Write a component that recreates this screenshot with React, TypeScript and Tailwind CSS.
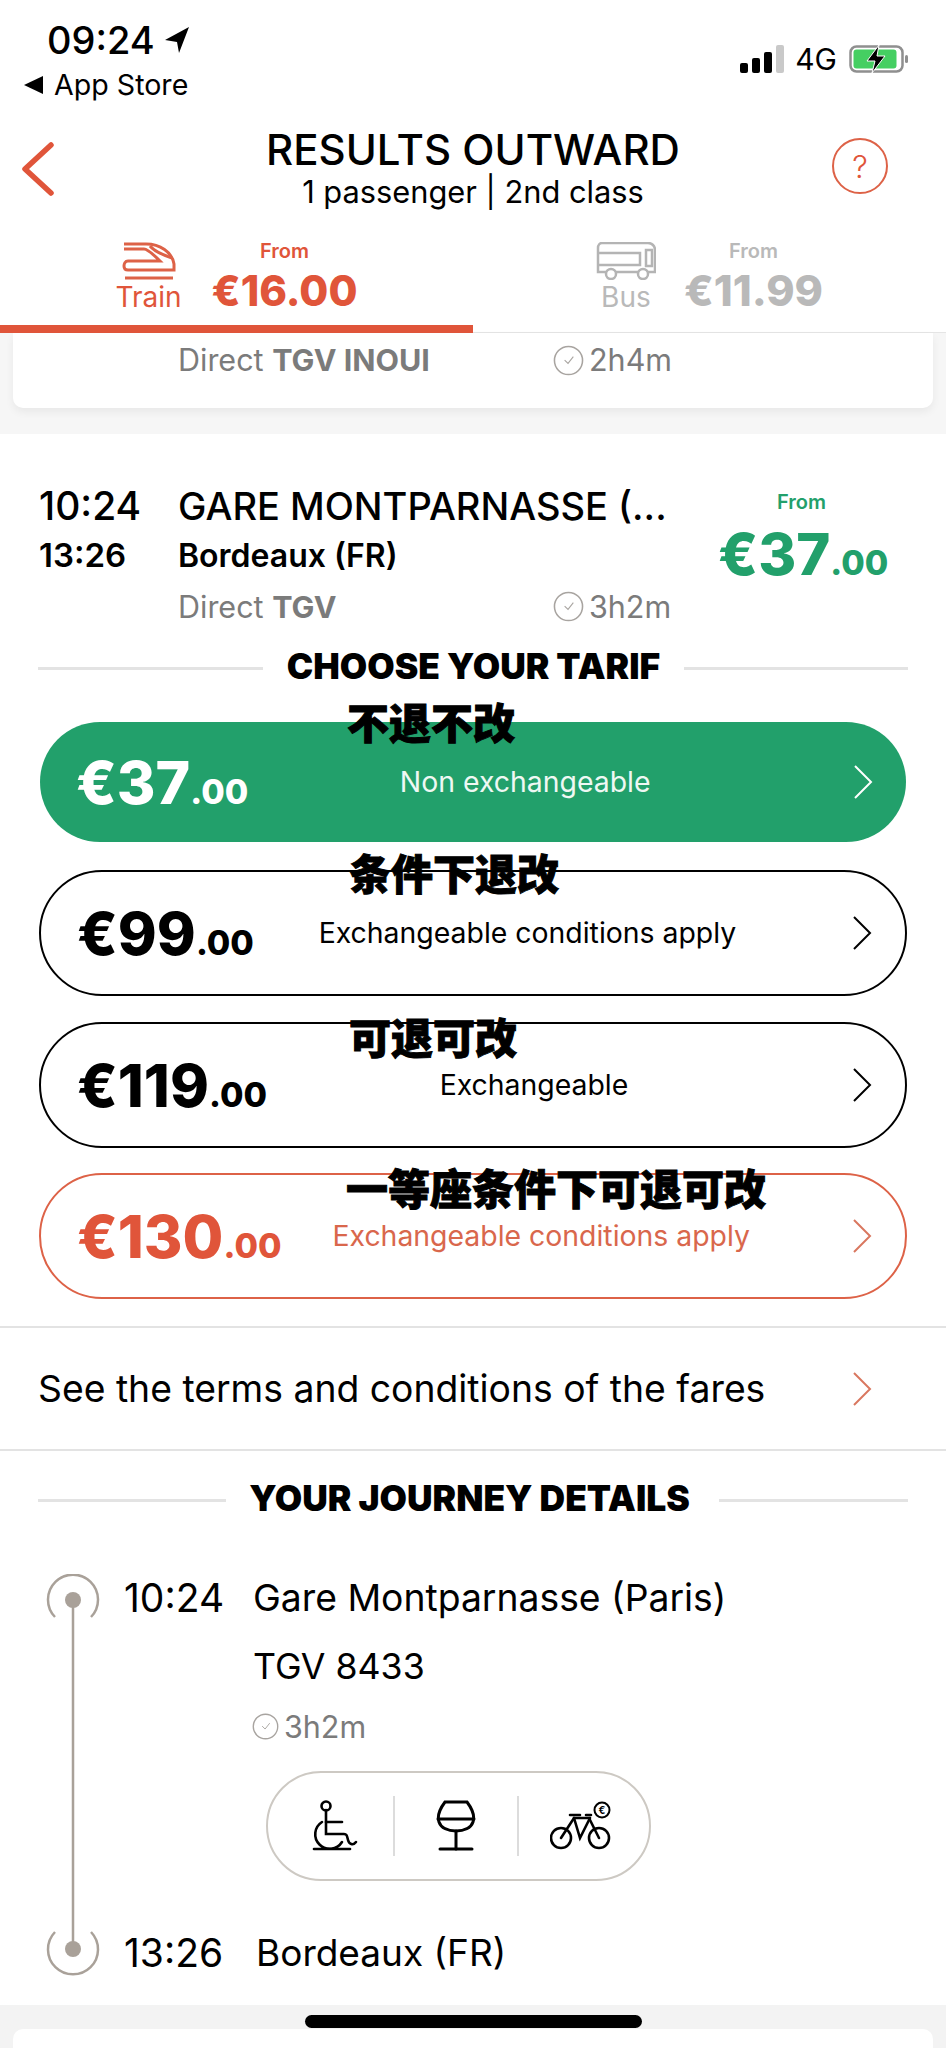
import React from "react";

const Clock = ({ s = 31 }: { s?: number }) => (
  <svg width={s} height={s} viewBox="0 0 32 32" fill="none" stroke="#a8a4a0" strokeWidth="1.6" className="shrink-0">
    <circle cx="16" cy="16" r="14.5" />
    <path d="M12 15.5l3.5 3.5L21 12" strokeWidth="1.1" />
  </svg>
);

const Chev = ({ c }: { c: string }) => (
  <svg width="20" height="36" viewBox="0 0 20 36" fill="none" stroke={c} strokeWidth="2" className="shrink-0">
    <path d="M2 2l16 16L2 34" />
  </svg>
);

const Divider = ({ title, left, right, tc }: { title: string; left: string; right: string; tc: string }) => (
  <div className="flex items-center px-[38px] h-[50px]">
    <div className={`${left} h-[3px] bg-[#e3e3e3]`} />
    <div className={`flex-1 text-center text-[35.4px] font-black text-black whitespace-nowrap mt-[-2px] ${tc}`}>{title}</div>
    <div className={`${right} h-[3px] bg-[#e3e3e3]`} />
  </div>
);

const Fare = ({
  box, price, label, cn, c, note, noteCls,
}: {
  box: string; price: string; label: string; cn: string; c: string; note: string; noteCls: string;
}) => (
  <div className={`relative flex items-center rounded-full pl-[36px] pr-[33px] ${box}`}>
    <div className="font-extrabold leading-none whitespace-nowrap">
      <span className="text-[59px]">{price}</span>
      <span className="text-[34px]">.00</span>
    </div>
    <div className={`flex-1 text-center text-[28.4px] whitespace-nowrap pr-[51px] ${cn}`}>{label}</div>
    <Chev c={c} />
    <div className={`absolute whitespace-nowrap text-[42px] leading-none font-black text-black [-webkit-text-stroke:1px_black] ${noteCls}`} style={{ fontFamily: '"Noto Sans CJK SC", sans-serif' }}>{note}</div>
  </div>
);

export default function App() {
  return (
    <div className="relative w-[946px] h-[2048px] overflow-hidden bg-white text-black" style={{ fontFamily: 'Inter, "Noto Sans CJK SC", sans-serif' }}>
      {/* status bar */}
      <div className="flex justify-between h-[117px]">
        <div className="pl-[24px] pt-[17px]">
          <div className="flex items-center pl-[23px] h-[46px]">
            <span className="text-[38px] font-medium leading-none">09:24</span>
            <svg width="24" height="26" viewBox="0 0 24 26" className="ml-[10px]"><path d="M24 0L14 26l-2-11L0 13z" fill="#000" /></svg>
          </div>
          <div className="flex items-center mt-[7px] h-[30px]">
            <svg width="19" height="18" viewBox="0 0 19 18"><path d="M19 0v18L0 9z" fill="#000" /></svg>
            <span className="ml-[11px] text-[28.6px] leading-none">App Store</span>
          </div>
        </div>
        <div className="flex items-center h-[28px] mt-[45px] pr-[37px]">
          <svg width="44" height="28" viewBox="0 0 44 28">
            <rect x="0" y="18" width="8" height="10" rx="2" fill="#000" />
            <rect x="12" y="13" width="8" height="15" rx="2" fill="#000" />
            <rect x="24" y="7" width="8" height="21" rx="2" fill="#000" />
            <rect x="36" y="0" width="8" height="28" rx="2" fill="#c9c9c9" />
          </svg>
          <span className="ml-[11px] text-[30px] leading-none">4G</span>
          <svg width="60" height="28" viewBox="0 0 60 28" className="ml-[12px]">
            <rect x="1.5" y="1.5" width="52" height="25" rx="6" fill="none" stroke="#8f8f8f" strokeWidth="2.5" />
            <rect x="4.5" y="4.5" width="43" height="19" rx="3" fill="#45cf62" />
            <rect x="56" y="10" width="3" height="8" rx="1.5" fill="#8f8f8f" />
            <path d="M30 0L18 16h8l-3 12 13-17h-8z" fill="#000" stroke="#fff" strokeWidth="1" />
          </svg>
        </div>
      </div>

      {/* header */}
      <div className="relative flex flex-col items-center h-[113px]">
        <div className="text-[42px] font-medium leading-none mt-[12px] h-[46px] whitespace-nowrap">RESULTS OUTWARD</div>
        <div className="text-[30.8px] leading-none mt-[2px] whitespace-nowrap">1 passenger | 2nd class</div>
        <svg width="34" height="54" viewBox="0 0 34 54" fill="none" stroke="#e0553a" strokeWidth="5.5" strokeLinecap="round" strokeLinejoin="round" className="absolute left-[21px] top-[25px]">
          <path d="M30 3L4 27l26 24" />
        </svg>
        <div className="absolute left-[832px] top-[21px] w-[56px] h-[56px] rounded-full border-2 border-[#dd6247] flex items-center justify-center text-[31px] font-light text-[#e0553a] leading-none">?</div>
      </div>

      {/* tabs */}
      <div className="flex h-[103px] border-b border-[#e5e5e5]">
        <div className="w-[473px] h-[103px] border-b-[8px] border-[#e0553a] flex justify-center items-start gap-[30px] pt-[12px] text-[#e0553a]">
          <div className="flex flex-col items-center">
            <svg width="54" height="38" viewBox="0 0 54 38" fill="none" stroke="#dd6247" strokeWidth="3">
              <path d="M2 2h22c14 0 26 8 28 20v6H6c-3 0-4-2-4-4s1-5 4-5h32C36 17 26 7 22 7H2" />
              <path d="M28 4c4 5 10 8 22 12" />
              <path d="M3 36h48" />
            </svg>
            <span className="text-[28px] leading-none mt-[3px]">Train</span>
          </div>
          <div className="flex flex-col items-center">
            <span className="text-[20px] font-semibold leading-none mt-[-1px]">From</span>
            <span className="text-[42px] font-extrabold leading-none mt-[9px]">€16.00</span>
          </div>
        </div>
        <div className="w-[473px] h-[103px] flex justify-center items-start gap-[28px] pt-[12px] text-[#b9b9b9]">
          <div className="flex flex-col items-center">
            <svg width="60" height="38" viewBox="0 0 60 38" fill="none" stroke="#b4b4b4" strokeWidth="2.5">
              <path d="M6 1h46c4 0 7 3 7 7v22H2V6c0-3 2-5 4-5z" />
              <path d="M2 11h42v12H2" />
              <path d="M50 8h6v16h-6z" />
              <circle cx="15" cy="32" r="5" fill="#fff" />
              <circle cx="47" cy="32" r="5" fill="#fff" />
            </svg>
            <span className="text-[28px] leading-none mt-[3px]">Bus</span>
          </div>
          <div className="flex flex-col items-center">
            <span className="text-[20px] font-semibold leading-none mt-[-1px]">From</span>
            <span className="text-[43px] font-extrabold leading-none mt-[8px]">€11.99</span>
          </div>
        </div>
      </div>

      {/* previous result card */}
      <div className="bg-[#f6f6f6] h-[101px] px-[13px]">
        <div className="bg-white rounded-b-[10px] h-[75px] shadow-[0_4px_8px_rgba(0,0,0,0.06)] flex pl-[165px] pt-[9px] items-start">
          <div className="w-[375px] text-[30.5px] leading-[36px] text-[#7b7b7b]">Direct <b className="font-bold">TGV INOUI</b></div>
          <div className="flex items-center gap-[5px] text-[30.5px] leading-[36px] text-[#7b7b7b]"><Clock />2h4m</div>
        </div>
      </div>

      {/* result */}
      <div className="pt-[47px]">
        <div className="flex pl-[39px]">
          <div className="w-[139px]">
            <div className="h-[50px] flex items-center text-[39px] font-medium">10:24</div>
            <div className="h-[50px] flex items-center text-[33px] font-semibold">13:26</div>
          </div>
          <div className="w-[540px]">
            <div className="h-[50px] flex items-center text-[38px] font-medium whitespace-nowrap">GARE MONTPARNASSE (...</div>
            <div className="h-[50px] flex items-center text-[32px] font-semibold whitespace-nowrap">Bordeaux (FR)</div>
            <div className="h-[51px] flex items-center text-[30.5px] text-[#7b7b7b]">
              <div className="w-[375px]">Direct <b className="font-bold">TGV</b></div>
              <div className="flex items-center gap-[5px]"><Clock />3h2m</div>
            </div>
          </div>
          <div className="w-[167px] text-[#22a06b] text-center">
            <div className="text-[20px] font-semibold leading-none mt-[11px]">From</div>
            <div className="font-extrabold leading-none mt-[13px] whitespace-nowrap"><span className="text-[58px]">€37</span><span className="text-[34px]">.00</span></div>
          </div>
        </div>

        <div className="mt-[11px]"><Divider title="CHOOSE YOUR TARIF" left="w-[225px]" right="w-[224px]" tc="" /></div>

        <div className="flex flex-col px-[39px] mt-[29px]">
          <Fare box="h-[120px] mx-[1px] bg-[#22a06b] text-white" price="€37" label="Non exchangeable" cn="text-[#eef8f3]" c="#ffffff" note="不退不改" noteCls="left-[307px] top-[-22px]" />
          <Fare box="h-[126px] mt-[28px] border-2 border-black text-black" price="€99" label="Exchangeable conditions apply" cn="text-black" c="#000000" note="条件下退改" noteCls="left-[308px] top-[-21px]" />
          <Fare box="h-[126px] mt-[26px] border-2 border-black text-black" price="€119" label="Exchangeable" cn="text-black" c="#000000" note="可退可改" noteCls="left-[308px] top-[-9px]" />
          <Fare box="h-[126px] mt-[25px] border-2 border-[#dd6247] text-[#e0553a]" price="€130" label="Exchangeable conditions apply" cn="text-[#d9674c]" c="#d9775f" note="一等座条件下可退可改" noteCls="left-[305px] top-[-9px]" />
        </div>

        <div className="mt-[27px] border-t-2 border-b-2 border-[#e3e3e3] h-[125px] flex items-center justify-between pl-[38px] pr-[74px]">
          <span className="text-[37.3px] whitespace-nowrap">See the terms and conditions of the fares</span>
          <Chev c="#d9775f" />
        </div>

        <div className="mt-[24px]"><Divider title="YOUR JOURNEY DETAILS" left="w-[188px]" right="w-[189px]" tc="pr-[6px]" /></div>

        {/* timeline */}
        <div className="relative pl-[124px] mt-[48px] h-[432px]">
          <svg width="56" height="402" viewBox="0 0 56 402" fill="none" className="absolute left-[45px] top-[1px]">
            <path d="M10 43A25 25 0 1 1 46 43" stroke="#a9a199" strokeWidth="2.5" />
            <path d="M10 358A25 25 0 1 0 46 358" stroke="#a9a199" strokeWidth="2.5" />
            <path d="M28 26V376" stroke="#a9a199" strokeWidth="2.5" />
            <circle cx="28" cy="26" r="8" fill="#a9a199" />
            <circle cx="28" cy="375" r="8" fill="#a9a199" />
          </svg>
          <div className="flex items-center h-[50px]">
            <span className="w-[129px] text-[39px]">10:24</span>
            <span className="text-[37.3px] whitespace-nowrap">Gare Montparnasse (Paris)</span>
          </div>
          <div className="pl-[129px] mt-[18px] text-[35.7px] leading-[50px] whitespace-nowrap">TGV 8433</div>
          <div className="ml-[128px] mt-[13px] flex items-center gap-[5px] text-[30.5px] text-[#7b7b7b]"><Clock s={27} />3h2m</div>
          <div className="ml-[142px] mt-[21px] w-[385px] h-[110px] rounded-full border-2 border-[#cdc9c3] flex items-center">
            <div className="w-[125px] flex justify-center pl-[8px]">
              <svg width="46" height="52" viewBox="0 0 46 52" fill="none" stroke="#000" strokeWidth="2.6" strokeLinecap="round">
                <circle cx="14" cy="6" r="4.5" />
                <path d="M14 10v24h18c3 0 3 2 4 6 1 4 5 6 8 2" />
                <path d="M14 22h16" />
                <path d="M10 22a14.5 14.5 0 1 0 20 20" />
                <path d="M2 49h36" />
              </svg>
            </div>
            <div className="w-[2px] h-[60px] bg-[#dcdcdc]" />
            <div className="w-[122px] flex justify-center">
              <svg width="40" height="52" viewBox="0 0 40 52" fill="none" stroke="#000" strokeWidth="3" strokeLinecap="round">
                <path d="M9 2h22c6 8 8 14 6 20-2 6-9 9-17 9S5 28 3 22C1 16 3 10 9 2z" />
                <path d="M2 19h36" />
                <path d="M20 31v18" />
                <path d="M4 49h32" />
              </svg>
            </div>
            <div className="w-[2px] h-[60px] bg-[#dcdcdc]" />
            <div className="flex-1 flex justify-center pr-[6px]">
              <svg width="62" height="50" viewBox="0 0 62 50" fill="none" stroke="#000" strokeWidth="2.6" strokeLinecap="round">
                <circle cx="11" cy="37" r="10" />
                <circle cx="49" cy="37" r="10" />
                <path d="M11 37l13-20h15l10 20" />
                <path d="M24 17l6 20 10-20M20 14h10M36 14h5" />
                <circle cx="52" cy="9" r="7.5" strokeWidth="2" />
                <text x="52" y="13" fontSize="10" textAnchor="middle" fill="#000" stroke="none" fontWeight="700">€</text>
              </svg>
            </div>
          </div>
          <div className="flex items-center h-[50px] mt-[47px]">
            <span className="w-[132px] text-[39px]">13:26</span>
            <span className="text-[37px] whitespace-nowrap">Bordeaux (FR)</span>
          </div>
        </div>
      </div>

      {/* next card */}
      <div className="bg-[#f3f3f3] pt-[24px] px-[13px] h-[60px]">
        <div className="bg-white rounded-t-[10px] h-full" />
      </div>

      <div className="absolute left-[305px] top-[2015px] w-[337px] h-[13px] rounded-full bg-black" />
    </div>
  );
}
